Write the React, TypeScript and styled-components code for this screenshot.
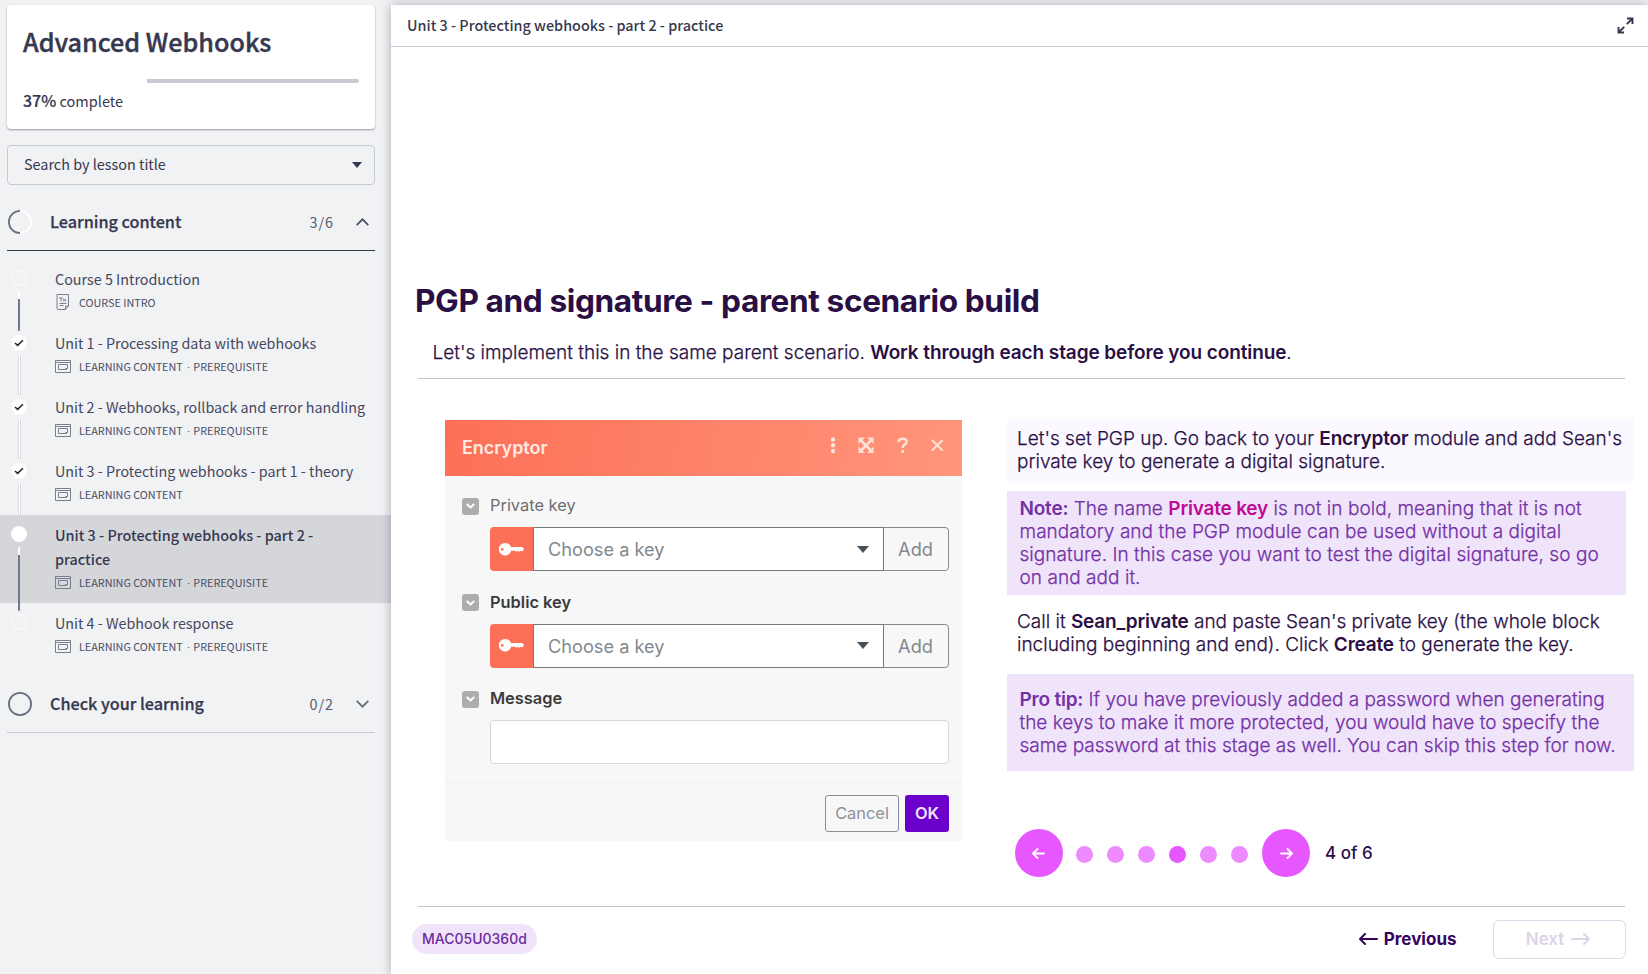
import React from "react";
import styled, { createGlobalStyle, css } from "styled-components";

const Global = createGlobalStyle`
  *, *::before, *::after { box-sizing: border-box; }
  body { margin: 0; background: #f1f2f4; }
  button { font: inherit; margin: 0; padding: 0; border: 0; background: none; color: inherit; cursor: pointer; }
  h1, h2, p, ol { margin: 0; padding: 0; list-style: none; }
`;

const Page = styled.div`
  display: grid;
  grid-template-columns: 391px minmax(0, 1fr);
  height: 974px;
  overflow: hidden;
  background: #f1f2f4;
  font-family: "Noto Sans CJK SC", "Noto Sans", sans-serif;
  color: #363850;
`;

/* ---------- sidebar ---------- */

const Sidebar = styled.aside`
  display: flex;
  flex-direction: column;
  padding-top: 5px;
`;

const CourseCard = styled.section`
  height: 124px;
  margin: 0 16px 16px 7px;
  padding: 18px 16px 0;
  border-radius: 4px;
  background: #fff;
  box-shadow: 0 1px 2px rgba(40, 42, 60, 0.45);
`;

const CourseTitle = styled.h1`
  font-size: 25.15px;
  font-weight: 500;
  line-height: 36px;
  white-space: nowrap;
  -webkit-text-stroke: 0.4px;
`;

const Track = styled.div`
  display: flex;
  justify-content: flex-end;
  height: 4px;
  margin: 20px 0 7px;
`;

const Remaining = styled.div<{ $share: number }>`
  width: ${(p) => p.$share}%;
  border-radius: 0 2px 2px 0;
  background: #c9cad6;
`;

const Complete = styled.p`
  font-size: 14.5px;
  line-height: 20px;
  b { font-size: 16px; font-weight: 500; -webkit-text-stroke: 0.2px; }
`;

const Search = styled.button`
  display: flex;
  align-items: center;
  justify-content: space-between;
  height: 40px;
  margin: 0 16px 9px 7px;
  padding: 0 12px 0 16px;
  border: 1px solid #c7c9d5;
  border-radius: 4px;
  font-size: 14.4px;
  span { padding-bottom: 3px; }
`;

const SectionHead = styled.button<{ $open?: boolean }>`
  display: grid;
  grid-template-columns: 43px 1fr auto 41px;
  align-items: center;
  height: 57px;
  margin: 0 16px 0 7px;
  border-bottom: 1px solid ${(p) => (p.$open ? "#363850" : "#c9cad0")};
  text-align: left;
  svg:first-child { margin-left: 1px; }
  svg:last-child { justify-self: end; margin-right: 6.5px; }
`;

const SectionName = styled.span`
  padding-bottom: 2px;
  font-size: 16.2px;
  font-weight: 500;
  -webkit-text-stroke: 0.25px;
`;

const Count = styled.span`
  padding-bottom: 1px;
  font-size: 14.4px;
  letter-spacing: 0.95px;
  color: #565a70;
`;

const Lessons = styled.ol`
  display: flex;
  flex-direction: column;
  flex: none;
  padding-top: 8px;
  height: 425px;
`;

const Lesson = styled.li<{ $active?: boolean }>`
  display: grid;
  grid-template-columns: 38px 1fr;
  column-gap: 17px;
  height: ${(p) => (p.$active ? 88 : 64)}px;
  padding-top: 8px;
  background: ${(p) => (p.$active ? "#d5d6da" : "transparent")};
`;

const Rail = styled.div<{ $done?: boolean }>`
  display: flex;
  flex-direction: column;
  align-items: center;
  gap: ${(p) => (p.$done ? 4 : 5)}px;
  padding-top: ${(p) => (p.$done ? 4 : 3)}px;
`;

const Marker = styled.span<{ $kind: "empty" | "done" | "current" }>`
  display: flex;
  align-items: center;
  justify-content: center;
  flex: none;
  width: 16px;
  height: 16px;
  border: 1px solid #fff;
  border-radius: 50%;
  background: ${(p) => (p.$kind === "empty" ? "transparent" : "#fff")};
`;

const Connector = styled.span<{ $dark?: boolean; $long?: boolean }>`
  flex: none;
  width: 3px;
  height: ${(p) => (p.$long ? 64 : 40)}px;
  margin-left: 1px;
  border-left: 1px solid #dcdde1;
  border-right: 1px solid #dcdde1;
  background: #fff;
  ${(p) =>
    p.$dark &&
    css`
      border: 0;
      width: 2px;
      margin-left: 0;
      border-radius: 1px;
      background: linear-gradient(#fff 8px, #74768a 8px);
    `}
`;

const LessonText = styled.div<{ $active?: boolean }>`
  display: flex;
  flex-direction: column;
  font-size: ${(p) => (p.$active ? 14.4 : 14.34)}px;
  font-weight: ${(p) => (p.$active ? 500 : 400)};
  line-height: 24px;
  white-space: pre-line;
  color: ${(p) => (p.$active ? "#363850" : "#44475e")};
`;

const Meta = styled.span`
  display: flex;
  align-items: center;
  gap: 8px;
  height: 22px;
  font-size: 10.8px;
  font-weight: 400;
  color: #4c4e64;
`;

const Separator = styled.span`
  margin: 0 3px 0 4px;
  font-family: "Liberation Sans", sans-serif;
`;

/* ---------- content ---------- */

const Main = styled.main`
  display: flex;
  flex-direction: column;
  margin-top: 5px;
  background: #fff;
  box-shadow: 0 0 10px rgba(40, 42, 60, 0.35);
  font-family: Inter, sans-serif;
  color: #2a0f45;
`;

const TopBar = styled.header`
  display: flex;
  align-items: center;
  justify-content: space-between;
  flex: none;
  height: 42px;
  padding: 0 14px 0 16px;
  border-bottom: 1px solid #c9cad3;
  font: 500 14.38px "Noto Sans CJK SC", "Noto Sans", sans-serif;
  color: #363850;
  span { padding-bottom: 2px; }
`;

const Slide = styled.article`
  display: flex;
  flex-direction: column;
  flex: none;
  height: 860px;
  margin: 0 23px 0 27px;
  padding-top: 234px;
  border-bottom: 1px solid #cbc0c4;
`;

const Heading = styled.h2`
  margin-left: -3px;
  font-size: 31.6px;
  font-weight: 700;
  line-height: 40px;
  white-space: nowrap;
  letter-spacing: -0.38px;
`;

const Lead = styled.p`
  height: 58px;
  padding: 20px 0 0 14.5px;
  border-bottom: 1px solid #cbc0c4;
  font-size: 19px;
  line-height: 24px;
  white-space: nowrap;
  font-weight: 300;
  -webkit-text-stroke: 0.25px;
  b { font-weight: 600; letter-spacing: -0.1px; -webkit-text-stroke: 0; }
`;

const Columns = styled.div`
  display: grid;
  grid-template-columns: 517px 627px;
  column-gap: 45px;
  padding: 40px 0 0 27px;
`;

/* module dialog */

const Dialog = styled.section`
  display: flex;
  flex-direction: column;
  height: 421px;
  margin-top: 1px;
  background: #f7f7f7;
`;

const DialogHead = styled.header`
  display: flex;
  justify-content: space-between;
  height: 56px;
  padding: 16px 17px 0 17px;
  background: linear-gradient(100deg, #fc7057, #ff957b);
  color: #ffe9e2;
  font-size: 18px;
  font-weight: 600;
  line-height: 24px;
  letter-spacing: -0.05px;
`;

const HeadTools = styled.div`
  display: flex;
  align-items: center;
  height: 18px;
  svg { display: block; }
`;

const Fields = styled.div`
  display: flex;
  flex-direction: column;
  height: 307px;
  padding: 16px 13px 0 17px;
  border-bottom: 1px solid #efefef;
`;

const Field = styled.div`
  height: 97px;
`;

const Label = styled.div<{ $strong?: boolean }>`
  display: flex;
  align-items: center;
  gap: 11px;
  height: 26px;
  font-size: 16.4px;
  font-weight: ${(p) => (p.$strong ? 600 : 400)};
  color: ${(p) => (p.$strong ? "#3a3b3d" : "#6c6d6f")};
`;

const Fold = styled.span`
  display: flex;
  align-items: center;
  justify-content: center;
  width: 17px;
  height: 17px;
  margin-top: 2px;
  border-radius: 3px;
  background: #adadad;
`;

const Picker = styled.div`
  display: grid;
  grid-template-columns: 43px 1fr 65px;
  height: 44px;
  margin: 9px 0 0 28px;
  border-radius: 4px;
  overflow: hidden;
  font-size: 18.2px;
  color: #82888d;
`;

const KeyTile = styled.span`
  display: flex;
  align-items: center;
  justify-content: center;
  background: #fc7057;
`;

const PickerValue = styled.span`
  display: flex;
  align-items: center;
  justify-content: space-between;
  padding: 0 14px 0 14px;
  border: 1px solid #737b81;
  background: #fff;
`;

const AddButton = styled.button`
  padding-right: 1px;
  border: 1px solid #838b91;
  border-left: 0;
  border-radius: 0 4px 4px 0;
`;

const TextInput = styled.div`
  height: 44px;
  margin: 9px 0 0 28px;
  border: 1px solid #d8d8d8;
  border-radius: 4px;
  background: #fff;
`;

const DialogFoot = styled.footer`
  display: flex;
  justify-content: flex-end;
  gap: 6px;
  padding: 12px 13px 0;
`;

const DialogButton = styled.button<{ $primary?: boolean }>`
  width: ${(p) => (p.$primary ? 44 : 74)}px;
  height: 37px;
  padding-bottom: 2px;
  border-radius: 3px;
  border: ${(p) => (p.$primary ? "0" : "1.5px solid #879098")};
  background: ${(p) => (p.$primary ? "#6b00cc" : "transparent")};
  color: ${(p) => (p.$primary ? "#f0e2ff" : "#8b9197")};
  font-size: 16.4px;
  font-weight: ${(p) => (p.$primary ? 600 : 400)};
`;

/* instructions */

const Guide = styled.div`
  display: flex;
  flex-direction: column;
  font-size: 19px;
  font-weight: 300;
  line-height: 23.1px;
  white-space: pre;
  -webkit-text-stroke: 0.25px;
  b { font-weight: 600; letter-spacing: -0.2px; -webkit-text-stroke: 0; }
`;

const Step = styled.p<{ $tinted?: boolean }>`
  height: ${(p) => (p.$tinted ? 64 : 79)}px;
  padding: ${(p) => (p.$tinted ? "8px 10px" : "15px 10px")};
  background: ${(p) => (p.$tinted ? "#fbf9ff" : "transparent")};
`;

const Note = styled.p<{ $tip?: boolean }>`
  height: ${(p) => (p.$tip ? 97 : 104)}px;
  width: ${(p) => (p.$tip ? 627 : 619)}px;
  margin-top: ${(p) => (p.$tip ? 0 : 8)}px;
  padding: ${(p) => (p.$tip ? 14 : 6)}px 12.5px 0;
  background: #f0e4fb;
  color: #7331a5;
  letter-spacing: ${(p) => (p.$tip ? 0 : 0.05)}px;
`;

const Hot = styled.b`
  color: #bf0a94;
`;

const Pager = styled.nav`
  display: flex;
  align-items: center;
  margin: 58px 0 0 7.5px;
  font-size: 17px;
  font-weight: 500;
  -webkit-text-stroke: 0;
`;

const RoundButton = styled.button`
  display: flex;
  align-items: center;
  justify-content: center;
  width: 48px;
  height: 48px;
  border-radius: 50%;
  background: #e657ff;
`;

const Dots = styled.div`
  display: flex;
  gap: 14.2px;
  margin: 2px 14px 0 13px;
`;

const Dot = styled.span<{ $on?: boolean }>`
  width: 17px;
  height: 17px;
  border-radius: 50%;
  background: ${(p) => (p.$on ? "#e657ff" : "#ee8aff")};
`;

const PageCount = styled.span`
  margin: 2px 0 0 14.5px;
`;

const SlideFoot = styled.footer`
  display: flex;
  align-items: center;
  height: 64px;
  padding: 0 22.5px 0 21px;
`;

const Code = styled.span`
  padding: 0 10px;
  border-radius: 15px;
  background: #f0e4fb;
  color: #6d2a9c;
  font-size: 14px;
  font-weight: 500;
  line-height: 30px;
`;

const PreviousButton = styled.button`
  display: flex;
  align-items: center;
  gap: 6px;
  margin: 0 36px 0 auto;
  font-size: 17px;
  font-weight: 700;
  color: #35055f;
`;

const NextButton = styled.button`
  display: flex;
  align-items: center;
  justify-content: center;
  gap: 7px;
  width: 133px;
  height: 39px;
  padding-right: 2px;
  border: 1.5px solid #e0d5e9;
  border-radius: 6px;
  font-size: 17px;
  font-weight: 600;
  color: #ddd3e6;
`;

/* ---------- drawings ---------- */

const Arrow = ({ right, size, height, stroke, width }: { right?: boolean; size: number; height: number; stroke: string; width: number }) => (
  <svg width={size} height={height} viewBox={`0 0 ${size} ${height}`} fill="none" stroke={stroke} strokeWidth={width} strokeLinecap="round" strokeLinejoin="round">
    <g transform={right ? `translate(${size} 0) scale(-1 1)` : undefined}>
      <path d={`M${size - 1} ${height / 2}H1M${height / 2} 1L1 ${height / 2}L${height / 2} ${height - 1}`} />
    </g>
  </svg>
);

const Triangle = ({ w, h, color }: { w: number; h: number; color: string }) => (
  <svg width={w} height={h} viewBox="0 0 10 6" preserveAspectRatio="none">
    <path d="M0 0H10L5 6Z" fill={color} />
  </svg>
);

const Chevron = ({ up }: { up?: boolean }) => (
  <svg width="13" height="8" viewBox="0 0 13 8" fill="none" stroke={up ? "#4a4c62" : "#66697c"} strokeWidth="1.7">
    <path d={up ? "M.7 7.2L6.5 1.3L12.3 7.2" : "M.7 .8L6.5 6.7L12.3 .8"} />
  </svg>
);

const Ring = ({ half }: { half?: boolean }) => (
  <svg width="24" height="24" viewBox="0 0 24 24" fill="none" strokeWidth="1.8">
    <circle cx="12" cy="12" r="11.1" stroke={half ? "#fff" : "#6b6e82"} />
    {half && <path d="M12 .9A11.1 11.1 0 0 0 12 23.1" stroke="#6b6e82" />}
  </svg>
);

const Check = () => (
  <svg width="10" height="8" viewBox="0 0 10 8" fill="none" stroke="#22232b" strokeWidth="1.5">
    <path d="M1 4L3.6 6.4L9 1.2" />
  </svg>
);

const WindowIcon = () => (
  <svg width="16" height="13" viewBox="0 0 16 13" fill="none" stroke="#7c7e90">
    <path d="M.5 .5H15.5V12.5H.5ZM.5 2.5H15.5M3.5 4.5H12.5V8.5L11 9.5H3.5ZM12.5 8.5H10.5V9.5" />
  </svg>
);

const DocIcon = () => (
  <svg width="16" height="16" viewBox="0 0 16 16" fill="none" stroke="#7c7e90">
    <path d="M2 .5H13.5V12L10.5 15.5H3Q2 15.5 2 14.5ZM13.5 12H10.5V15.5M4.5 9.5H11.5M4.5 11.5H8.5M4 4H8M6 4V7.5M8 5L11 7.5M11 5L8 7.5" />
  </svg>
);

const ExpandIcon = () => (
  <svg width="17" height="17" viewBox="0 0 17 17" fill="none" stroke="#363850" strokeWidth="1.9">
    <path d="M10 1.5H15.5V7M15 2L9.8 7.2M1.5 10V15.5H7M2 15L7.2 9.8" />
  </svg>
);

const KeyIcon = () => (
  <svg width="25" height="13" viewBox="0 0 25 13" fill="#fff">
    <path fillRule="evenodd" d="M6.3 0A6.3 6.3 0 0 1 12 4H23.5L25 6L23.3 8.5L21.8 7.7L20.4 8.7L19 7.7L17.5 8.7L16 7.8H12.2A6.3 6.3 0 1 1 6.3 0ZM3.3 4.9A1.4 1.4 0 1 0 3.4 7.7A1.4 1.4 0 0 0 3.3 4.9Z" />
  </svg>
);

const FoldButton = () => (
  <Fold>
    <svg width="9" height="6" viewBox="0 0 9 6" fill="none" stroke="#fff" strokeWidth="2">
      <path d="M.8 .9L4.5 4.4L8.2 .9" />
    </svg>
  </Fold>
);

const DialogTools = () => (
  <HeadTools>
    <svg width="116" height="18" viewBox="0 0 116 18" fill="none" stroke="#ffe1d8" strokeWidth="2">
      <g fill="#ffe1d8" stroke="none">
        <circle cx="4" cy="3.5" r="2.2" />
        <circle cx="4" cy="9.3" r="2.2" />
        <circle cx="4" cy="15" r="2.2" />
        <path d="M29.5 1.5h6.5l-6.5 6.5ZM44.5 1.5v6.5l-6.5-6.5ZM29.5 17v-6.5l6.5 6.5ZM44.5 17h-6.5l6.5-6.5Z" />
      </g>
      <path d="M31 3.5L43 15.5M43 3.5L31 15.5" strokeWidth="2.6" />
      <path d="M69.6 6Q69.8 2.8 73.6 2.8Q77.6 2.8 77.6 5.8Q77.6 7.4 75.6 8.6Q73.6 9.8 73.6 12" strokeWidth="2.5" />
      <circle cx="73.6" cy="15.4" r="1.7" fill="#ffe1d8" stroke="none" />
      <path d="M103 4L113.5 14.5M113.5 4L103 14.5" strokeWidth="2.2" />
    </svg>
  </HeadTools>
);

type LessonData = { title: string; tags: string[]; kind: "empty" | "done" | "current"; doc?: boolean; last?: boolean };

const lessons: LessonData[] = [
  { title: "Course 5 Introduction", tags: ["COURSE INTRO"], kind: "empty", doc: true },
  { title: "Unit 1 - Processing data with webhooks", tags: ["LEARNING CONTENT", "PREREQUISITE"], kind: "done" },
  { title: "Unit 2 - Webhooks, rollback and error handling", tags: ["LEARNING CONTENT", "PREREQUISITE"], kind: "done" },
  { title: "Unit 3 - Protecting webhooks - part 1 - theory", tags: ["LEARNING CONTENT"], kind: "done" },
  { title: "Unit 3 - Protecting webhooks - part 2 -\npractice", tags: ["LEARNING CONTENT", "PREREQUISITE"], kind: "current" },
  { title: "Unit 4 - Webhook response", tags: ["LEARNING CONTENT", "PREREQUISITE"], kind: "empty", last: true },
];

const KeyPicker = () => (
  <Picker>
    <KeyTile><KeyIcon /></KeyTile>
    <PickerValue>
      <span>Choose a key</span>
      <Triangle w={12} h={7} color="#475159" />
    </PickerValue>
    <AddButton>Add</AddButton>
  </Picker>
);

export default function App() {
  return (
    <>
      <Global />
      <Page>
        <Sidebar>
          <CourseCard>
            <CourseTitle>Advanced Webhooks</CourseTitle>
            <Track><Remaining $share={63} /></Track>
            <Complete><b>37%</b> complete</Complete>
          </CourseCard>
          <Search>
            <span>Search by lesson title</span>
            <Triangle w={10} h={6} color="#363850" />
          </Search>
          <SectionHead $open>
            <Ring half />
            <SectionName>Learning content</SectionName>
            <Count>3/6</Count>
            <Chevron up />
          </SectionHead>
          <Lessons>
            {lessons.map((l) => {
              const active = l.kind === "current";
              return (
                <Lesson key={l.title} $active={active}>
                  <Rail $done={l.kind === "done"}>
                    <Marker $kind={l.kind}>{l.kind === "done" && <Check />}</Marker>
                    {!l.last && <Connector $dark={l.kind !== "done"} $long={active} />}
                  </Rail>
                  <LessonText $active={active}>
                    <span>{l.title}</span>
                    <Meta>
                      {l.doc ? <DocIcon /> : <WindowIcon />}
                      <span>
                        {l.tags[0]}
                        {l.tags[1] && <><Separator>·</Separator>{l.tags[1]}</>}
                      </span>
                    </Meta>
                  </LessonText>
                </Lesson>
              );
            })}
          </Lessons>
          <SectionHead>
            <Ring />
            <SectionName>Check your learning</SectionName>
            <Count>0/2</Count>
            <Chevron />
          </SectionHead>
        </Sidebar>

        <Main>
          <TopBar>
            <span>Unit 3 - Protecting webhooks - part 2 - practice</span>
            <ExpandIcon />
          </TopBar>
          <Slide>
            <Heading>PGP and signature - parent scenario build</Heading>
            <Lead>Let's implement this in the same parent scenario. <b>Work through each stage before you continue</b>.</Lead>
            <Columns>
              <Dialog>
                <DialogHead>
                  <span>Encryptor</span>
                  <DialogTools />
                </DialogHead>
                <Fields>
                  <Field>
                    <Label><FoldButton />Private key</Label>
                    <KeyPicker />
                  </Field>
                  <Field>
                    <Label $strong><FoldButton />Public key</Label>
                    <KeyPicker />
                  </Field>
                  <Field>
                    <Label $strong><FoldButton />Message</Label>
                    <TextInput />
                  </Field>
                </Fields>
                <DialogFoot>
                  <DialogButton>Cancel</DialogButton>
                  <DialogButton $primary>OK</DialogButton>
                </DialogFoot>
              </Dialog>
              <Guide>
                <Step $tinted>Let's set PGP up. Go back to your <b>Encryptor</b> module and add Sean's{"\n"}private key to generate a digital signature.</Step>
                <Note><b>Note:</b> The name <Hot>Private key</Hot> is not in bold, meaning that it is not{"\n"}mandatory and the PGP module can be used without a digital{"\n"}signature. In this case you want to test the digital signature, so go{"\n"}on and add it.</Note>
                <Step>Call it <b>Sean_private</b> and paste Sean's private key (the whole block{"\n"}including beginning and end). Click <b>Create</b> to generate the key.</Step>
                <Note $tip><b>Pro tip:</b> If you have previously added a password when generating{"\n"}the keys to make it more protected, you would have to specify the{"\n"}same password at this stage as well. You can skip this step for now.</Note>
                <Pager>
                  <RoundButton><Arrow size={13} height={11} stroke="#fff" width={1.8} /></RoundButton>
                  <Dots>
                    {[1, 2, 3, 4, 5, 6].map((n) => <Dot key={n} $on={n === 4} />)}
                  </Dots>
                  <RoundButton><Arrow right size={13} height={11} stroke="#fff" width={1.8} /></RoundButton>
                  <PageCount>4 of 6</PageCount>
                </Pager>
              </Guide>
            </Columns>
          </Slide>
          <SlideFoot>
            <Code>MAC05U0360d</Code>
            <PreviousButton><Arrow size={19} height={12} stroke="#35055f" width={2} />Previous</PreviousButton>
            <NextButton>Next<Arrow right size={19} height={12} stroke="#ddd3e6" width={2} /></NextButton>
          </SlideFoot>
        </Main>
      </Page>
    </>
  );
}
